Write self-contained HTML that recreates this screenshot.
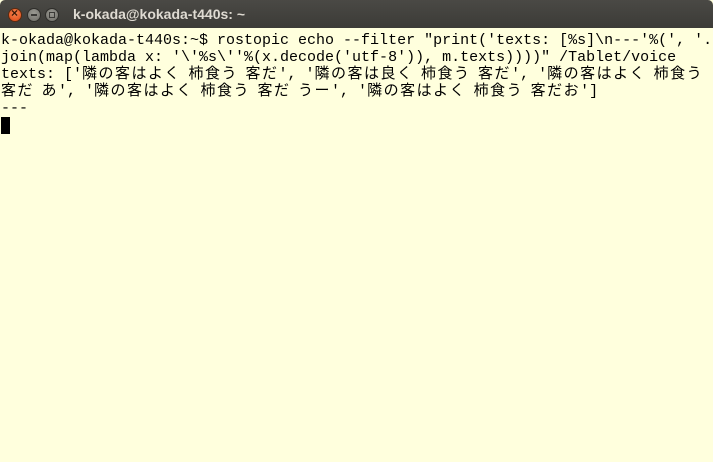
<!DOCTYPE html>
<html><head><meta charset="utf-8"><style>
html,body{margin:0;padding:0;width:713px;height:462px;overflow:hidden;background:#ffffdd}
.tb{position:absolute;left:0;top:0;width:713px;height:28px;background:linear-gradient(#4a4945,#3c3b37);border-radius:5px 5px 0 0}
.btn{position:absolute;top:8px;width:14px;height:14px;border-radius:50%}
.c{left:8px;background:radial-gradient(circle at 50% 35%,#f5844f,#dd4814);border:1px solid #5a2a10;box-sizing:border-box}
.m{left:27px;background:radial-gradient(circle at 50% 35%,#9a9992,#6e6d67);border:1px solid #2e2d2a;box-sizing:border-box}
.x{left:45px;background:radial-gradient(circle at 50% 35%,#9a9992,#6e6d67);border:1px solid #2e2d2a;box-sizing:border-box}
.c:after{content:"×";position:absolute;left:2px;top:-3px;font:bold 12px "Liberation Sans",sans-serif;color:#3a1a08}
.m:after{content:"";position:absolute;left:3px;top:5px;width:6px;height:2px;background:#3a3936}
.x:after{content:"";position:absolute;left:3px;top:3px;width:4px;height:4px;border:1px solid #3a3936}
.t{position:absolute;left:73px;top:6px;font:bold 14px "Liberation Sans",sans-serif;color:#dfdbd2}
pre{position:absolute;left:1px;top:32px;margin:0;font:15px/17px "Liberation Mono","Noto Sans CJK JP",monospace;color:#000;white-space:pre}
.j{letter-spacing:1.5px;word-spacing:-3px}
.cur{display:inline-block;width:9px;height:17px;background:#000;vertical-align:top}
</style></head><body>
<div class="tb"><div class="btn c"></div><div class="btn m"></div><div class="btn x"></div><div class="t">k-okada@kokada-t440s: ~</div></div>
<pre>k-okada@kokada-t440s:~$ rostopic echo --filter "print('texts: [%s]\n---'%(', '.
join(map(lambda x: '\'%s\''%(x.decode('utf-8')), m.texts))))" /Tablet/voice
texts: ['<span class="j">隣の客はよく 柿食う 客だ</span>', '<span class="j">隣の客は良く 柿食う 客だ</span>', '<span class="j">隣の客はよく 柿食う</span>
<span class="j">客だ あ</span>', '<span class="j">隣の客はよく 柿食う 客だ うー</span>', '<span class="j">隣の客はよく 柿食う 客だお</span>']
---
<span class="cur"></span></pre>
</body></html>
